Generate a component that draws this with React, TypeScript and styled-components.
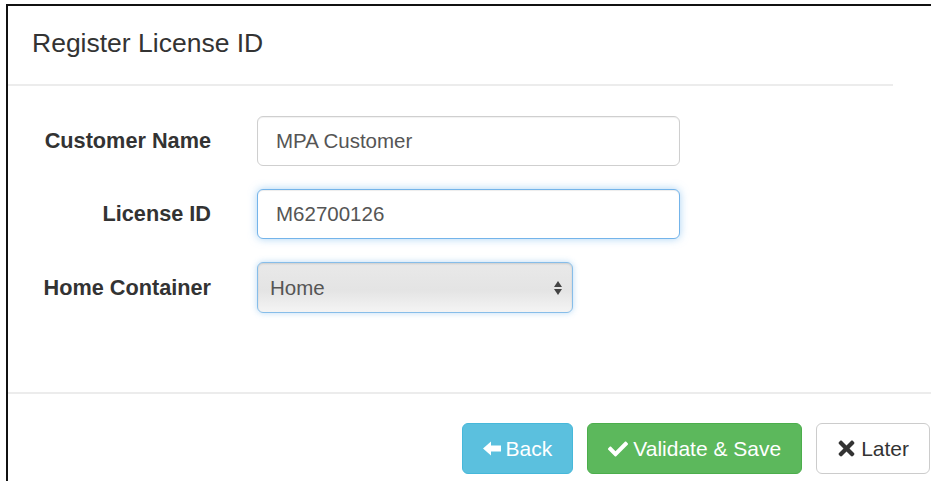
import React from 'react'
import styled, { createGlobalStyle } from 'styled-components'
import { FaCheck, FaTimes } from 'react-icons/fa'

const GlobalStyle = createGlobalStyle`
  html, body {
    margin: 0;
    padding: 0;
    background: #fff;
    overflow: hidden;
  }
  body {
    font-family: 'Liberation Sans', Arial, sans-serif;
    color: #333;
  }
`

const Page = styled.div`
  padding: 4px 0 0 6px;
  height: 481px;
  box-sizing: border-box;
`

const Modal = styled.div`
  border-top: 2px solid #111;
  border-left: 2px solid #111;
  height: 100%;
  background: #fff;
`

const Header = styled.div`
  margin-right: 38px;
  padding: 18px 0 22px 24px;
  border-bottom: 2px solid #ececec;
`

const Title = styled.h4`
  margin: 0;
  font-size: 26.5px;
  font-weight: normal;
  line-height: 38px;
  color: #333;
`

const Body = styled.div`
  padding: 30px 0 79px 0;
  display: flex;
  flex-direction: column;
  gap: 23px;
  border-bottom: 2px solid #ececec;
`

const Row = styled.div`
  display: flex;
  align-items: center;
  gap: 46px;
`

const Label = styled.label`
  width: 203px;
  text-align: right;
  font-size: 21.7px;
  font-weight: bold;
  color: #333;
`

const Input = styled.input<{ $focused?: boolean }>`
  width: 423px;
  height: 50px;
  box-sizing: border-box;
  padding: 0 18px;
  font-family: 'Liberation Sans', Arial, sans-serif;
  font-size: 20.5px;
  color: #555;
  background: #fff;
  border: 1.5px solid ${(p) => (p.$focused ? '#74b4ea' : '#cfcfcf')};
  border-radius: 6px;
  outline: none;
  box-shadow: ${(p) =>
    p.$focused
      ? 'inset 0 1px 1px rgba(0,0,0,.075), 0 0 9px rgba(102,175,233,.55)'
      : 'inset 0 1px 1px rgba(0,0,0,.06)'};
`

const SelectBox = styled.div`
  position: relative;
  width: 316px;
  height: 51px;
  box-sizing: border-box;
  padding: 0 12px;
  display: flex;
  align-items: center;
  font-size: 20.5px;
  color: #555;
  border: 1.5px solid #86bde9;
  border-radius: 6px;
  background: linear-gradient(#e9e9e9, #e4e4e4 55%, #f4f4f4);
  box-shadow: inset 0 1px 2px rgba(0,0,0,.12), 0 0 6px rgba(102,175,233,.45);
`

const Spinner = styled.svg`
  position: absolute;
  right: 9px;
  top: 50%;
  transform: translateY(-50%);
`

const Footer = styled.div`
  display: flex;
  justify-content: flex-end;
  gap: 14px;
  padding: 29px 1px 0 0;
`

const tones = {
  info: { bg: '#5bc0de', border: '#46b8da', color: '#fff' },
  success: { bg: '#5cb85c', border: '#4cae4c', color: '#fff' },
  plain: { bg: '#fff', border: '#ccc', color: '#333' },
}

const Button = styled.button<{ $tone: keyof typeof tones }>`
  height: 51px;
  padding: 0 20px;
  display: flex;
  align-items: center;
  gap: 5px;
  font-family: 'Liberation Sans', Arial, sans-serif;
  font-size: 21px;
  border-radius: 6px;
  cursor: pointer;
  background: ${(p) => tones[p.$tone].bg};
  border: 1.5px solid ${(p) => tones[p.$tone].border};
  color: ${(p) => tones[p.$tone].color};
`

// icon box; $trim pulls in the empty sides of narrow glyphs
const Icon = styled.span<{ $size: number; $trim?: number }>`
  display: inline-flex;
  font-size: ${(p) => p.$size}px;
  margin: 0 ${(p) => -(p.$trim ?? 0)}px;
`

// chunky left arrow, glyphicon style
const BackArrow = () => (
  <svg width="18" height="15" viewBox="0 0 18 15">
    <path d="M0 7.5 L8 0.5 V4.5 H18 V10.5 H8 V14.5 Z" fill="currentColor" />
  </svg>
)

export default function App() {
  return (
    <>
      <GlobalStyle />
      <Page>
        <Modal>
          <Header>
            <Title>Register License ID</Title>
          </Header>
          <Body>
            <Row>
              <Label>Customer Name</Label>
              <Input defaultValue="MPA Customer" />
            </Row>
            <Row>
              <Label>License ID</Label>
              <Input $focused defaultValue="M62700126" />
            </Row>
            <Row>
              <Label>Home Container</Label>
              <SelectBox>
                Home
                <Spinner width="10" height="16" viewBox="0 0 10 16">
                  <path d="M5 1 L9 7 H1 Z" fill="#444" />
                  <path d="M5 15 L9 9 H1 Z" fill="#444" />
                </Spinner>
              </SelectBox>
            </Row>
          </Body>
          <Footer>
            <Button $tone="info">
              <Icon $size={19}>
                <BackArrow />
              </Icon>
              Back
            </Button>
            <Button $tone="success">
              <Icon $size={20}>
                <FaCheck />
              </Icon>
              Validate &amp; Save
            </Button>
            <Button $tone="plain">
              <Icon $size={23} $trim={2}>
                <FaTimes />
              </Icon>
              Later
            </Button>
          </Footer>
        </Modal>
      </Page>
    </>
  )
}
